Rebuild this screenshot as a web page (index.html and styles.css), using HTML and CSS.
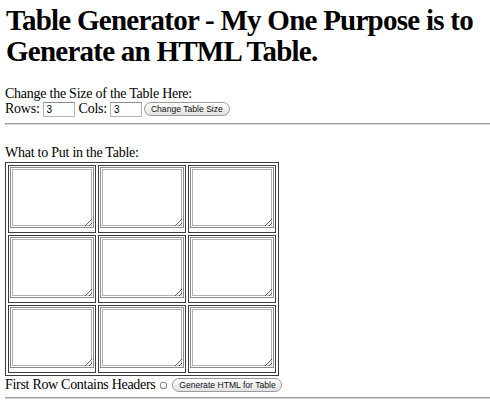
FILE: index.html
```html
<!DOCTYPE html>
<html>
<head>
<meta charset="utf-8">
<title>Table Generator</title>
<link rel="stylesheet" href="styles.css">
</head>
<body>
<h1 class="title">Table Generator - My One Purpose is to Generate an HTML Table.</h1>
<form class="size-form">
  <div class="line">Change the Size of the Table Here:</div>
  <div class="line controls">
    <span>Rows:</span>
    <input class="num" type="text" value="3">
    <span class="gap-label">Cols:</span>
    <input class="num" type="text" value="3">
    <button class="pill" type="button">Change Table Size</button>
  </div>
</form>
<hr class="rule rule-top">
<div class="line label">What to Put in the Table:</div>
<table class="grid">
  <tr><td><textarea></textarea></td><td><textarea></textarea></td><td><textarea></textarea></td></tr>
  <tr><td><textarea></textarea></td><td><textarea></textarea></td><td><textarea></textarea></td></tr>
  <tr><td><textarea></textarea></td><td><textarea></textarea></td><td><textarea></textarea></td></tr>
</table>
<div class="line controls footer">
  <span class="footer-label">First Row Contains Headers</span>
  <input class="check" type="checkbox">
  <button class="pill wide" type="button">Generate HTML for Table</button>
</div>
<hr class="rule rule-bottom">
</body>
</html>
```

FILE: styles.css
```css
html, body {
  background: #fff;
}
body {
  margin: 0 0 0 5px;
  font-family: "Liberation Serif", "Times New Roman", serif;
  font-size: 14px;
  letter-spacing: -0.25px;
  color: #000;
}
.title {
  margin: 5px 0 19px 1px;
  font-size: 29px;
  line-height: 31px;
  letter-spacing: -0.75px;
  font-weight: bold;
}
.size-form {
  margin: 0;
}
.line {
  line-height: 15px;
  height: 15px;
}
.controls {
  display: flex;
  align-items: center;
  height: 16px;
  line-height: 16px;
}
.num {
  box-sizing: border-box;
  width: 32px;
  height: 15px;
  margin: 0 0 0 3px;
  padding: 0 3px;
  border: 1px solid #b4b4b4;
  border-top-color: #8a8a8a;
  font-family: "Liberation Sans", Arial, sans-serif;
  font-size: 10px;
  letter-spacing: 0;
  color: #000;
  outline: none;
}
.gap-label {
  margin-left: 4px;
}
.gap-label + .num {
  margin-left: 3px;
}
.pill {
  box-sizing: border-box;
  height: 14px;
  margin-left: 2px;
  padding: 0 4px;
  border: 1px solid #9a9a9a;
  border-radius: 7px;
  background: linear-gradient(#ffffff, #f0f0f0 50%, #e2e2e2);
  font-family: "Liberation Sans", Arial, sans-serif;
  font-size: 8.6px;
  letter-spacing: 0;
  line-height: 12px;
  color: #111;
  width: 86px;
  white-space: nowrap;
}
.pill.wide {
  width: 110px;
  margin-left: 5px;
}
.rule {
  height: 0;
  border: 0;
  border-top: 1px solid #9c9c9c;
  border-bottom: 1px solid #d6d6d6;
  margin: 0;
}
.rule-top {
  margin-top: 6px;
}
.label {
  margin-top: 20px;
}
.grid {
  margin-top: 2px;
  border: 1px solid #3c3c3c;
  border-spacing: 2px;
  border-collapse: separate;
}
.grid td {
  border: 1px solid #3c3c3c;
  padding: 1px 1px 4px 1px;
  width: 84px;
  height: 61px;
  vertical-align: top;
}
.grid textarea {
  display: block;
  box-sizing: border-box;
  width: 84px;
  height: 61px;
  margin: 0;
  border: 1px solid #8c8c8c;
  box-shadow: inset 0 0 0 1px #fff, inset 0 0 0 2px #b0b0b0;
  padding: 2px;
  font-family: "Liberation Mono", monospace;
  font-size: 11px;
  outline: none;
}
.footer {
  height: 17px;
  line-height: 17px;
}
.footer-label {
  letter-spacing: -0.3px;
}
.check {
  appearance: none;
  -webkit-appearance: none;
  box-sizing: border-box;
  width: 7px;
  height: 7px;
  margin: 1px 0 0 5px;
  border: 1px solid #8a8a8a;
  border-radius: 2px;
  background: linear-gradient(#fff, #e6e6e6);
}
.rule-bottom {
  margin-top: 4px;
}
```
